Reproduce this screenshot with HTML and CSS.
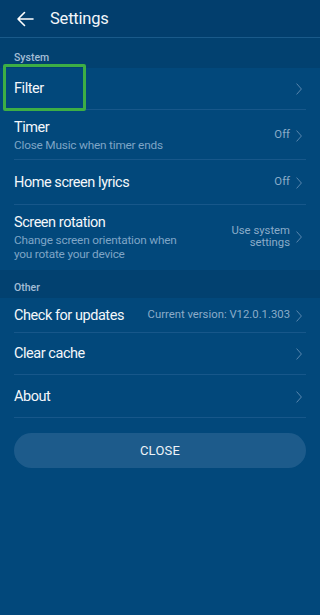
FILE: index.html
```html
<!DOCTYPE html>
<html>
<head>
<meta charset="utf-8">
<link rel="stylesheet" href="styles.css">
</head>
<body>
<div class="screen">
  <header class="topbar">
    <svg class="back" width="18" height="16" viewBox="0 0 18 16"><path d="M17 8H2M8.5 1.5L2 8l6.5 6.5" fill="none" stroke="#ffffff" stroke-width="1.6" stroke-linecap="round" stroke-linejoin="round"/></svg>
    <span class="title">Settings</span>
  </header>

  <div class="section">System</div>
  <div class="list">
    <div class="row row-filter highlight">
      <div class="text"><div class="name">Filter</div></div>
      <div class="right"><svg class="chev" width="6" height="12" viewBox="0 0 6 12"><path d="M0.6 0.6L5.4 6L0.6 11.4" fill="none" stroke="#5a87ae" stroke-width="1"/></svg></div>
    </div>
    <div class="row row-timer">
      <div class="text"><div class="name">Timer</div><div class="sub">Close Music when timer ends</div></div>
      <div class="right"><span class="val">Off</span><svg class="chev" width="6" height="12" viewBox="0 0 6 12"><path d="M0.6 0.6L5.4 6L0.6 11.4" fill="none" stroke="#5a87ae" stroke-width="1"/></svg></div>
    </div>
    <div class="row row-lyrics">
      <div class="text"><div class="name">Home screen lyrics</div></div>
      <div class="right"><span class="val">Off</span><svg class="chev" width="6" height="12" viewBox="0 0 6 12"><path d="M0.6 0.6L5.4 6L0.6 11.4" fill="none" stroke="#5a87ae" stroke-width="1"/></svg></div>
    </div>
    <div class="row row-rot last">
      <div class="text"><div class="name">Screen rotation</div><div class="sub">Change screen orientation when<br>you rotate your device</div></div>
      <div class="right"><span class="val">Use system<br>settings</span><svg class="chev" width="6" height="12" viewBox="0 0 6 12"><path d="M0.6 0.6L5.4 6L0.6 11.4" fill="none" stroke="#5a87ae" stroke-width="1"/></svg></div>
    </div>
  </div>

  <div class="section section-other">Other</div>
  <div class="list">
    <div class="row row-upd">
      <div class="text"><div class="name">Check for updates</div></div>
      <div class="right"><span class="val">Current version: V12.0.1.303</span><svg class="chev" width="6" height="12" viewBox="0 0 6 12"><path d="M0.6 0.6L5.4 6L0.6 11.4" fill="none" stroke="#5a87ae" stroke-width="1"/></svg></div>
    </div>
    <div class="row row-cache">
      <div class="text"><div class="name">Clear cache</div></div>
      <div class="right"><svg class="chev" width="6" height="12" viewBox="0 0 6 12"><path d="M0.6 0.6L5.4 6L0.6 11.4" fill="none" stroke="#5a87ae" stroke-width="1"/></svg></div>
    </div>
    <div class="row row-about">
      <div class="text"><div class="name">About</div></div>
      <div class="right"><svg class="chev" width="6" height="12" viewBox="0 0 6 12"><path d="M0.6 0.6L5.4 6L0.6 11.4" fill="none" stroke="#5a87ae" stroke-width="1"/></svg></div>
    </div>
  </div>

  <div class="btnwrap"><button class="close">CLOSE</button></div>
</div>
</body>
</html>
```

FILE: styles.css
```css
html, body {
  margin: 0;
  padding: 0;
  background: #02487b;
}
body {
  font-family: Roboto, "Noto Sans", "Liberation Sans", sans-serif;
  color: #ffffff;
}
.screen {
  width: 320px;
  height: 615px;
  background: #02487b;
  overflow: hidden;
}
.topbar {
  height: 38px;
  box-sizing: border-box;
  background: #023e6d;
  border-bottom: 1px solid #1a5a8a;
  display: flex;
  align-items: center;
  padding-left: 16px;
}
.back {
  display: block;
}
.title {
  margin-left: 16px;
  font-size: 16.5px;
  color: #f2f6fa;
  letter-spacing: -0.2px;
}
.section {
  height: 30px;
  box-sizing: border-box;
  background: #024170;
  padding: 13px 0 0 14px;
  font-size: 10.5px;
  font-weight: 500;
  color: #a4bed6;
}
.section-other {
  height: 28px;
  padding-top: 11px;
}
.list {
  background: #02487b;
  padding: 0 14px;
}
.row {
  display: flex;
  align-items: center;
  justify-content: space-between;
  border-bottom: 1px solid #17578a;
  box-sizing: border-box;
  position: relative;
}
.row.last {
  border-bottom: none;
}
.row-filter { height: 42px; padding-top: 1px; }
.row-timer { height: 50px; padding-top: 2px; }
.row-lyrics { height: 45px; padding-top: 1px; }
.row-rot { height: 65px; padding-bottom: 1px; }
.row-upd { height: 35px; padding-top: 1px; }
.row-cache { height: 42px; padding-top: 1px; }
.row-about { height: 43px; padding-top: 2px; }
.highlight::before {
  content: "";
  position: absolute;
  left: -11px;
  top: -4px;
  width: 77px;
  height: 41px;
  border: 3px solid #3dae45;
  border-radius: 2px;
}
.name {
  font-size: 14.5px;
  color: #f4f7fa;
  line-height: 18px;
  letter-spacing: -0.45px;
}
.sub {
  font-size: 11.8px;
  color: #7ea5c6;
  line-height: 14px;
  margin-top: 1px;
  letter-spacing: -0.2px;
}
.right {
  display: flex;
  align-items: center;
}
.val {
  font-size: 11.3px;
  color: #8bacc9;
  text-align: right;
  line-height: 12.5px;
}
.chev {
  display: block;
  margin: 0 4px 0 6px;
}
.btnwrap {
  padding: 15px 14px 0 14px;
}
.close {
  display: block;
  width: 100%;
  height: 35px;
  border: none;
  border-radius: 18px;
  background: #1d5b8b;
  color: #eef3f8;
  font-family: Roboto, "Noto Sans", "Liberation Sans", sans-serif;
  font-size: 13px;
  letter-spacing: 0.2px;
}
```
